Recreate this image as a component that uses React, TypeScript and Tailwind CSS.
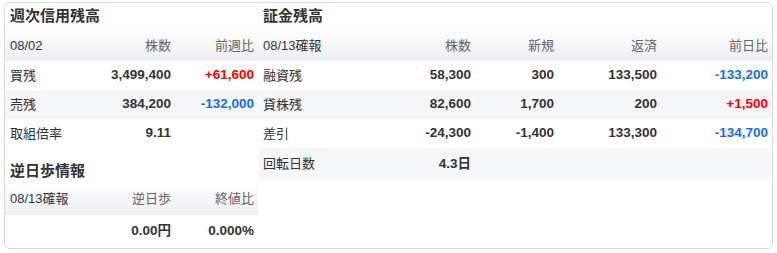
const font = { fontFamily: '"Liberation Sans", "Noto Sans CJK JP", sans-serif' };

type Cell = { v: string; c?: string };

const RED = 'text-[#ff0000]';
const BLUE = 'text-[#1a6fdc]';

function HeaderRow({ cols, grid, labels }: { cols: string; grid: string; labels: string[] }) {
  return (
    <div className={`grid ${grid} items-center bg-gradient-to-b from-white to-[#eceef1] pl-[5px] pr-1 text-[13px] ${cols}`}>
      <div className="text-[#333]">{labels[0]}</div>
      {labels.slice(1).map((l, i) => (
        <div key={i} className="text-right text-[#666]">{l}</div>
      ))}
    </div>
  );
}

function DataRow({ grid, label, cells, gray, h = 'h-[29px]' }: { grid: string; label: string; cells: Cell[]; gray?: boolean; h?: string }) {
  return (
    <div className={`grid ${grid} ${h} items-center pl-[5px] pr-1 ${gray ? 'bg-[#f5f6f8]' : ''}`}>
      <div className="text-[13px] text-[#333]">{label}</div>
      {cells.map((c, i) => (
        <div key={i} className={`text-right text-[13.5px] font-bold ${c.c ?? 'text-[#333]'}`}>{c.v}</div>
      ))}
    </div>
  );
}

export default function App() {
  const leftGrid = 'grid-cols-[85px_76px_83px]';
  const rightGrid = 'grid-cols-[117px_91px_83px_103px_111px]';
  return (
    <div className="pl-1 pt-[2px]" style={font}>
      <div className="flex h-[247px] w-[769px] overflow-hidden rounded-md border border-[#d6dae0] bg-white">
        {/* left */}
        <div className="flex w-[253px] flex-col">
          <div className="flex h-[27px] items-end pl-[5px] pb-[3px] text-[15px] font-bold text-[#333]">週次信用残高</div>
          <HeaderRow grid={leftGrid} cols="h-[31px]" labels={['08/02', '株数', '前週比']} />
          <DataRow grid={leftGrid} label="買残" cells={[{ v: '3,499,400' }, { v: '+61,600', c: RED }]} />
          <DataRow grid={leftGrid} label="売残" gray cells={[{ v: '384,200' }, { v: '-132,000', c: BLUE }]} />
          <DataRow grid={leftGrid} label="取組倍率" cells={[{ v: '9.11' }, { v: '' }]} />
          <div className="flex h-[35px] items-center pl-[5px] pt-[12px] text-[15px] font-bold text-[#333]">逆日歩情報</div>
          <HeaderRow grid={leftGrid} cols="h-[32px]" labels={['08/13確報', '逆日歩', '終値比']} />
          <DataRow grid={leftGrid} h="h-[33px]" label="" cells={[{ v: '0.00円' }, { v: '0.000%' }]} />
        </div>
        {/* right */}
        <div className="flex flex-1 flex-col">
          <div className="flex h-[27px] items-end pl-[5px] pb-[3px] text-[15px] font-bold text-[#333]">証金残高</div>
          <HeaderRow grid={rightGrid} cols="h-[31px]" labels={['08/13確報', '株数', '新規', '返済', '前日比']} />
          <DataRow grid={rightGrid} label="融資残" cells={[{ v: '58,300' }, { v: '300' }, { v: '133,500' }, { v: '-133,200', c: BLUE }]} />
          <DataRow grid={rightGrid} label="貸株残" gray cells={[{ v: '82,600' }, { v: '1,700' }, { v: '200' }, { v: '+1,500', c: RED }]} />
          <DataRow grid={rightGrid} label="差引" cells={[{ v: '-24,300' }, { v: '-1,400' }, { v: '133,300' }, { v: '-134,700', c: BLUE }]} />
          <div className="rounded-md bg-[#f5f6f8]">
            <DataRow grid={rightGrid} h="h-[32px]" label="回転日数" cells={[{ v: '4.3日' }, { v: '' }, { v: '' }, { v: '' }]} />
          </div>
        </div>
      </div>
    </div>
  );
}
